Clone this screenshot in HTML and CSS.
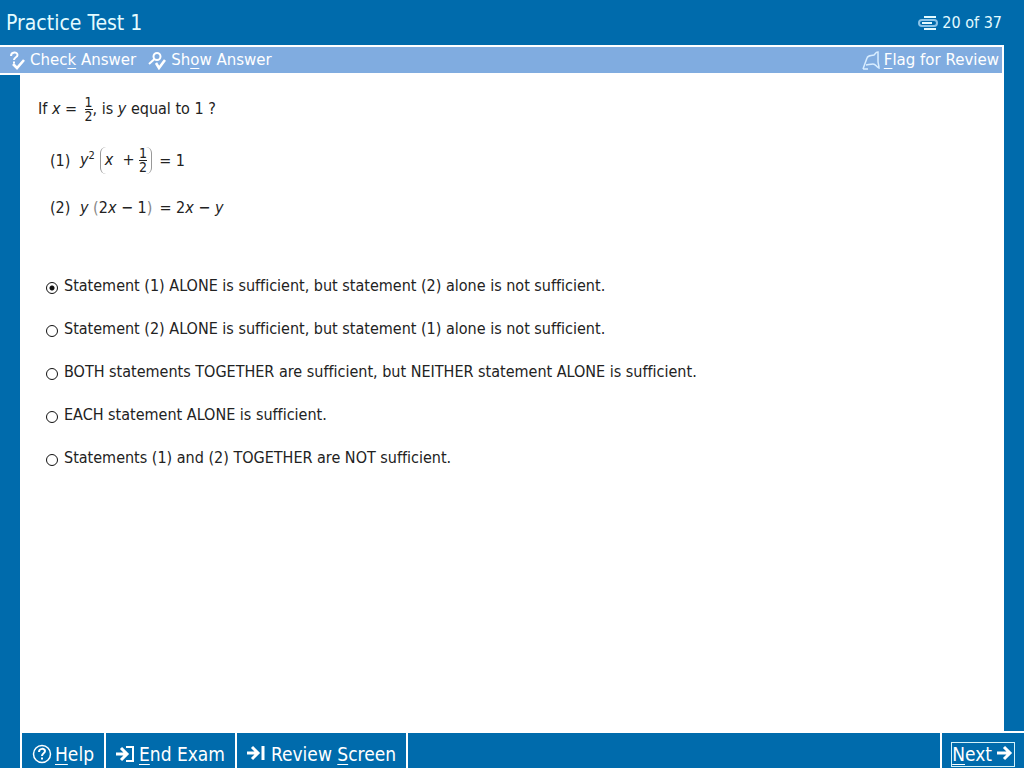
FILE: index.html
```html
<!DOCTYPE html>
<html lang="en">
<head>
    <meta charset="UTF-8">
    <meta name="viewport" content="width=device-width, initial-scale=1.0">
    <title>Practice Test 1</title>
    <link rel="stylesheet" href="styles.css">
</head>
<body>

    <header class="title-bar">
        <h1>Practice Test 1</h1>
        <div class="progress">
            <svg width="20" height="16" viewBox="0 0 20 16" fill="none" stroke="#e4fbff">
                <path d="M6 2h12M6 14h12" stroke-width="2"/>
                <rect x="1" y="5" width="18" height="6" rx="3" stroke="#8cc4e8" stroke-width="2"/>
                <path d="M4 8h10" stroke-width="2"/>
            </svg>
            <span>20 of 37</span>
        </div>
    </header>

    <div class="toolbar">
        <button type="button" class="tool">
            <svg width="16" height="19" viewBox="0 0 16 19" fill="none" stroke="#fff" stroke-width="2">
                <path d="M2 5C2 0.500 8.500 0.500 8.500 4C8.500 6.500 5 6 5 9M5 10.500v2"/>
                <path d="M4 13l4 4l7-8" stroke-width="2.600"/>
            </svg>
            <span>Chec<u>k</u> Answer</span>
        </button>
        <button type="button" class="tool">
            <svg width="18" height="19" viewBox="0 0 18 19" fill="none" stroke="#fff" stroke-width="2">
                <circle cx="9" cy="5.500" r="3.500"/>
                <path d="M6.500 8l-5.500 5"/>
                <path d="M8 12l3 5l6-8" stroke-width="2.600"/>
            </svg>
            <span>Sh<u>o</u>w Answer</span>
        </button>
        <button type="button" class="tool flag">
            <svg width="19" height="19" viewBox="0 0 19 19" fill="none" stroke="#d8edff" stroke-width="1.500">
                <path d="M1 18L5 7C6 4 9 5 12 4C14 3 13 1 16 1V10C16 13 17 14 17 17C14 16 14 13 11 13C8 13 6 14 4 14M1 18h5"/>
            </svg>
            <span><u>F</u>lag for Review</span>
        </button>
    </div>

    <main class="content">
        <p class="question">If <i>x</i> = <span class="frac"><span>1</span><span>2</span></span>, is <i>y</i> equal to 1 ?</p>
        <div class="statement">
            <span class="number">(1)</span>
            <span><i>y</i><sup>2</sup></span>
            <span class="group"><i>x</i>&nbsp; +&nbsp;<span class="frac"><span>1</span><span>2</span></span></span>
            <span class="rest">= 1</span>
        </div>
        <div class="statement">
            <span class="number">(2)</span>
            <span><i>y</i> <span class="paren">(</span>2<i>x</i> − 1<span class="paren">)</span></span>
            <span class="rest">= 2<i>x</i> − <i>y</i></span>
        </div>

        <form class="answers">
            <label><input type="radio" name="answer" value="a" checked> Statement (1) ALONE is sufficient, but statement (2) alone is not sufficient.</label>
            <label><input type="radio" name="answer" value="b"> Statement (2) ALONE is sufficient, but statement (1) alone is not sufficient.</label>
            <label><input type="radio" name="answer" value="c"> BOTH statements TOGETHER are sufficient, but NEITHER statement ALONE is sufficient.</label>
            <label><input type="radio" name="answer" value="d"> EACH statement ALONE is sufficient.</label>
            <label><input type="radio" name="answer" value="e"> Statements (1) and (2) TOGETHER are NOT sufficient.</label>
        </form>
    </main>

    <footer class="nav-bar">
        <button type="button" class="nav">
            <svg width="20" height="20" viewBox="0 0 20 20" fill="none" stroke="#fff">
                <circle cx="10" cy="10" r="8.500" stroke-width="1.500"/>
                <path d="M7 8C7 4 13 4 13 7C13 9.500 10 9 10 12M10 13.500v2" stroke-width="2"/>
            </svg>
            <span><u>H</u>elp</span>
        </button>
        <button type="button" class="nav">
            <svg width="20" height="18" viewBox="0 0 20 18" fill="none" stroke="#fff" stroke-width="3">
                <path d="M0 9h11M5 3l6 6l-6 6"/>
                <path d="M10 2h7v14h-7" stroke-width="2"/>
            </svg>
            <span><u>E</u>nd Exam</span>
        </button>
        <button type="button" class="nav review">
            <svg width="20" height="18" viewBox="0 0 20 18" fill="none" stroke="#fff" stroke-width="3">
                <path d="M0 8h10M5 2l6 6l-6 6M16 1v14"/>
            </svg>
            <span>Review <u>S</u>creen</span>
        </button>
        <button type="button" class="nav next">
            <span class="focus"><span><u>N</u>ext</span>
                <svg width="18" height="18" viewBox="0 0 18 18" fill="none" stroke="#fff" stroke-width="3">
                    <path d="M1 8h13M8 2l6 6l-6 6"/>
                </svg>
            </span>
        </button>
    </footer>

</body>
</html>
```
FILE: styles.css
```css
* {
    box-sizing: border-box;
}
body {
    margin: 0;
    min-height: 100vh;
    display: flex;
    flex-direction: column;
    background-color: #006bac;
    font-family: "DejaVu Sans Condensed", "DejaVu Sans", sans-serif;
    font-size: 16px;
    font-variant-ligatures: none;
    color: #222;
}
button {
    border: none;
    background: none;
    color: #fff;
    font-family: inherit;
    cursor: pointer;
}
u {
    text-underline-offset: 3px;
    text-decoration-thickness: 1px;
}
svg {
    flex: none;
}
.title-bar {
    display: flex;
    justify-content: space-between;
    align-items: center;
    height: 45px;
    padding: 0 22px 0 6px;
    color: #e4fbff;
}
.title-bar h1 {
    margin: 0;
    font-size: 21px;
    font-weight: normal;
}
.progress {
    display: flex;
    align-items: center;
    gap: 4px;
}
.toolbar {
    display: flex;
    gap: 12px;
    height: 30px;
    margin-right: 20px;
    padding: 0 3px 0 9px;
    background-color: #80ace0;
    border: 2px solid #fff;
    border-left: none;
}
.tool {
    display: flex;
    align-items: center;
    gap: 5px;
    padding: 0;
    font-family: "DejaVu Sans", sans-serif;
    font-size: 15px;
}
.flag {
    margin-left: auto;
    gap: 3px;
}
.content {
    flex: 1;
    margin: 0 20px;
    padding: 18px;
    background-color: #fff;
}
.question {
    margin: 0;
    line-height: 32px;
}
.question .frac {
    margin-left: 3px;
}
.frac {
    display: inline-flex;
    flex-direction: column;
    vertical-align: middle;
    font-size: 14px;
    line-height: 13px;
    text-align: center;
}
.frac span:first-child {
    border-bottom: 1px solid #222;
}
.statement {
    display: flex;
    align-items: center;
    height: 32px;
    margin: 19px 0 0 12px;
}
.statement + .statement {
    margin-top: 15px;
}
.number {
    width: 30px;
}
sup {
    font-size: 11px;
    line-height: 1;
}
.group {
    margin-left: 5px;
    padding: 0 4px;
    border-left: 1px solid #999;
    border-right: 1px solid #999;
    border-radius: 6px;
}
.rest {
    margin-left: 7px;
}
.paren {
    color: #888;
}
.answers {
    display: flex;
    flex-direction: column;
    gap: 19px;
    margin: 51px 0 0 8px;
}
.answers label {
    display: flex;
    align-items: center;
    gap: 6px;
    line-height: 24px;
}
.answers input {
    appearance: none;
    flex: none;
    width: 12px;
    height: 12px;
    margin: 3px 0 0;
    border: 1px solid #111;
    border-radius: 50%;
}
.answers input:checked {
    background: radial-gradient(circle, #111 0 2px, #fff 3px);
}
.nav-bar {
    display: flex;
    height: 37px;
    margin-left: 20px;
    border-left: 2px solid #fff;
    border-top: 2px solid #fff;
}
.nav {
    display: flex;
    align-items: center;
    gap: 3px;
    padding: 7px 10px 0;
    border-right: 2px solid #fff;
    font-size: 19px;
}
.review {
    gap: 4px;
}
.next {
    margin-left: auto;
    padding: 7px 9px 0;
    border-left: 2px solid #fff;
    border-right: none;
}
.focus {
    display: flex;
    align-items: center;
    gap: 4px;
    height: 25px;
    border: 1px solid #d5f3fa;
}
```
